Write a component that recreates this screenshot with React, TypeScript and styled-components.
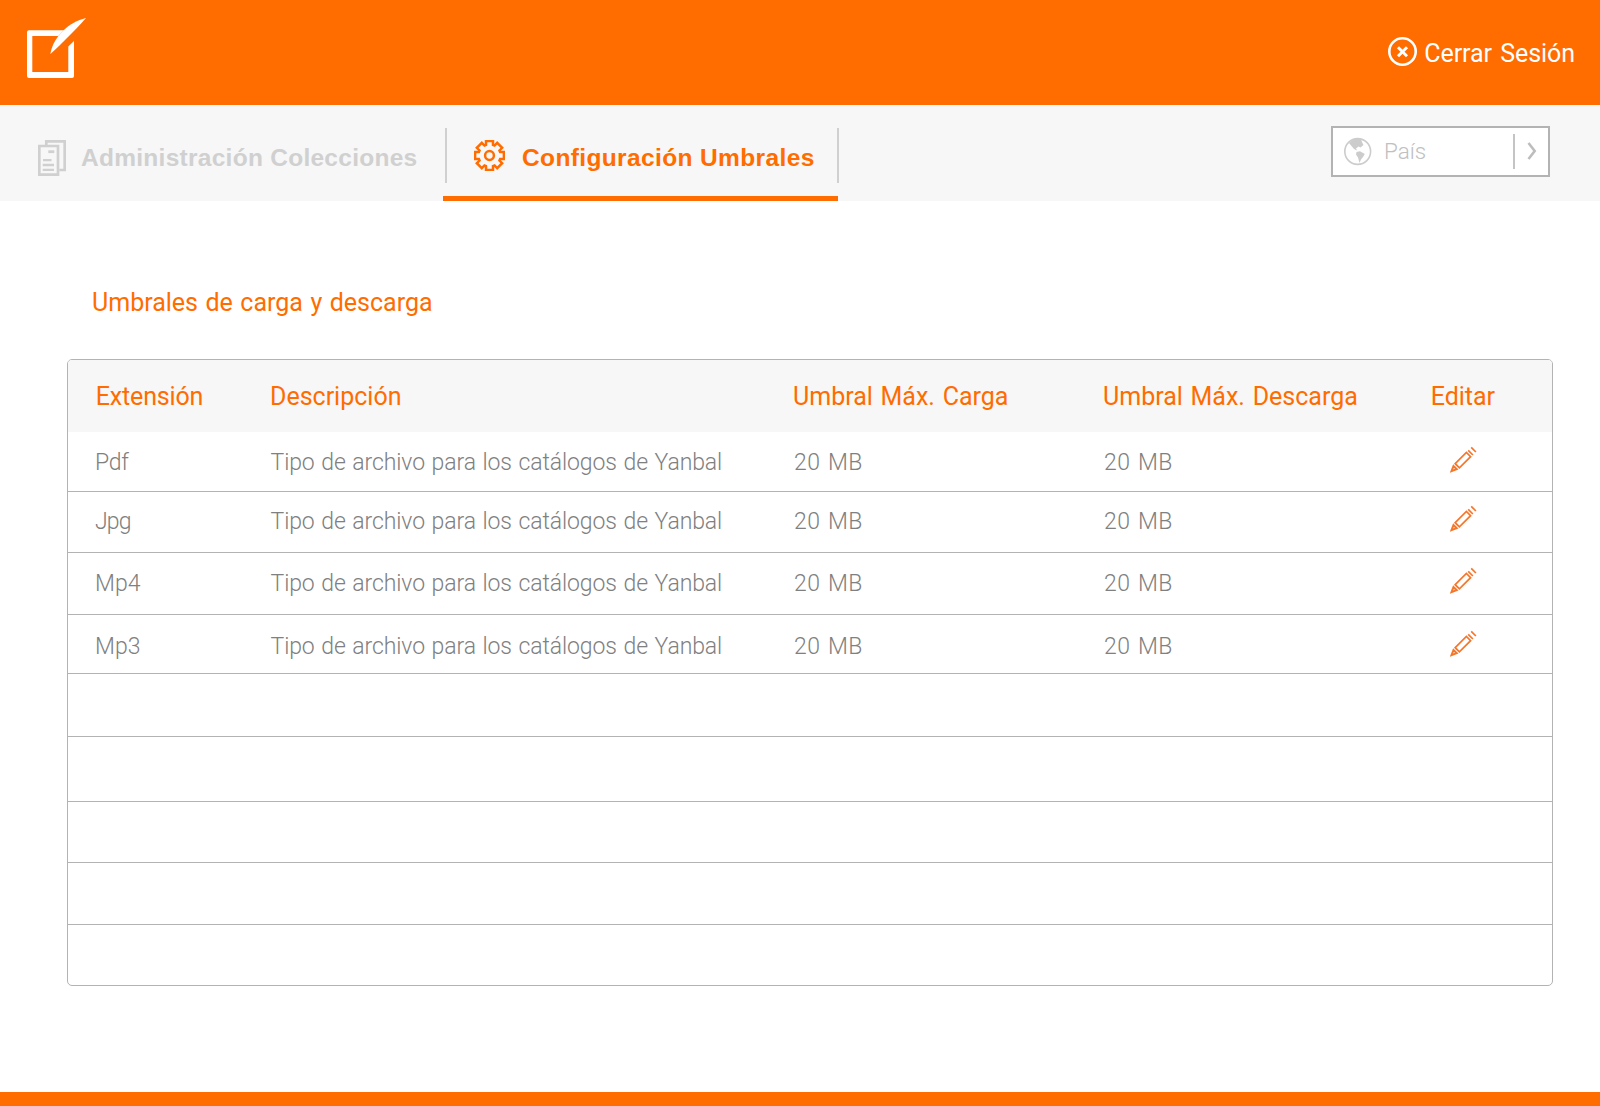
import React from "react";
import styled, { createGlobalStyle } from "styled-components";

const ORANGE = "#ff6c00";
const LINE = "#b3b3b3";

const GlobalStyle = createGlobalStyle`
  * { box-sizing: border-box; }
  body { margin: 0; background: #fff; font-family: Roboto, "Liberation Sans", sans-serif; }
  svg { display: block; flex: none; }
`;

const Page = styled.div`
  display: flex;
  flex-direction: column;
  width: 1600px;
  height: 1106px;
  border-bottom: 14px solid ${ORANGE};
`;

const TopBar = styled.header`
  display: flex;
  justify-content: space-between;
  height: 105px;
  padding: 17px 25px 0 26px;
  background: ${ORANGE};
`;

const Logout = styled.a`
  display: flex;
  height: 29px;
  margin-top: 20px;
  gap: 7px;
  color: #fff;
  font-size: 25px;
  line-height: 33px;
  letter-spacing: -0.05px;
  word-spacing: 2px;
`;

const Nav = styled.nav`
  display: flex;
  height: 96px;
  background: #f7f7f7;
`;

const Tab = styled.a<{ $active?: boolean }>`
  display: flex;
  width: ${p => (p.$active ? 395 : 443)}px;
  padding-left: ${p => (p.$active ? 2 : 38)}px;
  border-bottom: 5px solid ${p => (p.$active ? ORANGE : "transparent")};
  color: ${p => (p.$active ? ORANGE : "#d0d0d0")};
`;

const TabIcon = styled.span<{ $gap: number }>`
  margin: 35px ${p => p.$gap}px 0 0;
`;

const TabLabel = styled.span<{ $spacing: number }>`
  margin-top: 38px;
  font: bold 24.5px/30px "Liberation Sans", sans-serif;
  letter-spacing: ${p => p.$spacing}px;
  white-space: nowrap;
`;

const TabDivider = styled.i<{ $end?: boolean }>`
  flex: none;
  width: 2px;
  height: 55px;
  margin: 23px ${p => (p.$end ? "-1px 0 auto" : "27px 0 0")};
  background: #d0d0d0;
`;

const CountrySelect = styled.div`
  display: flex;
  align-items: center;
  width: 219px;
  height: 51px;
  margin: 21px 50px 0 auto;
  padding: 0 11px 0 11px;
  border: 2px solid ${LINE};
  background: #fff;
  color: #c0c0c0;
  font-size: 22.5px;
  font-weight: 300;
`;

const CountryLabel = styled.span`
  flex: 1;
  padding: 0 0 2px 12px;
`;

const SelectDivider = styled.i`
  width: 2px;
  height: 35px;
  margin-right: 12px;
  background: #c4c4c4;
`;

const Main = styled.main`
  flex: 1;
  padding: 84px 47px 0 67px;
`;

const Title = styled.h1`
  margin: 0;
  padding-left: 25px;
  color: ${ORANGE};
  font-size: 25px;
  font-weight: 400;
  line-height: 36px;
  word-spacing: 1.3px;
`;

const Table = styled.section`
  margin-top: 38px;
  border: 1px solid ${LINE};
  border-radius: 5px;
  overflow: hidden;
`;

const Row = styled.div<{ $height: number; $shift?: number }>`
  display: grid;
  grid-template-columns: 175px 523px 310px 327px 1fr;
  align-items: center;
  height: ${p => p.$height}px;
  padding: ${p => Math.max(p.$shift ?? 0, 0)}px 0 ${p => Math.max(-(p.$shift ?? 0), 0)}px 27px;
  border-bottom: 1px solid ${LINE};
  &:last-child { border-bottom: 0; }
`;

const HeadRow = styled(Row)`
  border-bottom: 0;
  background: #f7f7f7;
  color: ${ORANGE};
  font-size: 25px;
`;

const HeadCell = styled.span<{ $spacing?: number; $indent?: number }>`
  padding-left: ${p => p.$indent ?? 0}px;
  letter-spacing: ${p => p.$spacing ?? 0}px;
  word-spacing: 1.5px;
`;

const Cell = styled.span<{ $spacing?: number; $words?: number; $indent?: number }>`
  padding-left: ${p => p.$indent ?? 0}px;
  color: #808080;
  font-size: 23px;
  font-weight: 300;
  letter-spacing: ${p => p.$spacing ?? 0}px;
  word-spacing: ${p => p.$words ?? 0}px;
`;

const EditButton = styled.span`
  padding: 0 0 6px 20px;
`;

const Logo = () => (
  <svg width="61" height="62" viewBox="26 17 61 62" fill="#fff">
    <path d="M58.3 36H32.300V72H68.300V46.400L74 41V76a2 2 0 0 1-2 2H29a2 2 0 0 1-2-2V32.300a2 2 0 0 1 2-2H64Z" />
    <path d="M86 18C77 20.500 70 24 63.700 30.300L58 36.500C54.500 41 51.500 47 50.300 54C54 51 61 44 66 39C73 32 80 25 86 18Z" />
  </svg>
);

const CloseIcon = () => (
  <svg width="29" height="29" viewBox="0 0 29 29" fill="none" stroke="#fff">
    <circle cx="14.500" cy="14.500" r="13.200" strokeWidth="2.600" />
    <path d="M10 10.200L19 19.200M19 10.200L10 19.200" strokeWidth="3" />
  </svg>
);

const DocsIcon = () => (
  <svg width="28" height="36" viewBox="0 0 28 36" fill="none" stroke="currentColor">
    <path d="M8.300 5V1.300H26.700V30H21.500M1.300 6H20V34.700H1.300Z" strokeWidth="2.700" />
    <path d="M10.300 11.700H16.300" strokeWidth="2.800" />
    <path d="M5 20.200H13.500M4.700 25H16M4.700 29.800H16" strokeWidth="2.300" />
  </svg>
);

const gearOutline = Array.from({ length: 8 }, (_, i) => {
  const a = (i * Math.PI) / 4;
  return [[-3.5, -10.6], [-3.5, -14.4], [3.5, -14.4], [3.5, -10.6]]
    .map(([x, y]) => `${(15.5 + x * Math.cos(a) - y * Math.sin(a)).toFixed(2)},${(15.5 + x * Math.sin(a) + y * Math.cos(a)).toFixed(2)}`)
    .join(" ");
}).join(" ");

const GearIcon = () => (
  <svg width="31" height="31" viewBox="0 0 31 31" fill="none" stroke="currentColor" strokeWidth="2.500">
    <polygon points={gearOutline} />
    <circle cx="15.500" cy="15.500" r="4.400" />
  </svg>
);

const GlobeIcon = () => (
  <svg width="28" height="29" viewBox="0 0 28 29" fill="#ccc">
    <circle cx="13.700" cy="14.500" r="12.900" fill="none" stroke="#ccc" strokeWidth="1.600" />
    <path d="M5 6L10 2L17 2L18 5L19.500 8L16.500 10.500L14.500 9.500L12 11.500L13 13.500L10 12L7.500 9Z" />
    <path d="M12.500 15L16 14.200L20.800 17L19 20L17 22.500L15.500 26L14 20.500L12 17.500Z" />
  </svg>
);

const ChevronIcon = () => (
  <svg width="10" height="19" viewBox="0 0 10 19" fill="none" stroke="#bdbdbd" strokeWidth="2.600">
    <path d="M1.500 1L7.700 9L1.500 17" />
  </svg>
);

const PencilIcon = () => (
  <svg width="27" height="27" viewBox="0 0 27 27" fill="none" stroke="#f5772c" strokeWidth="1.700">
    <path d="M5.200 17.700L16.400 6.500L20.600 10.700L9.400 21.900Z" />
    <path d="M1.500 25.200L3.500 20L6.700 23.200Z" strokeWidth="2" />
    <path d="M18.200 4.300L22.900 9M21.200 1.300L25.900 6" />
  </svg>
);

const files = [
  { ext: "Pdf", spacing: -0.3, height: 60, shift: 1 },
  { ext: "Jpg", spacing: -0.8, height: 61, shift: -2 },
  { ext: "Mp4", spacing: 0, height: 62, shift: 0 },
  { ext: "Mp3", spacing: 0, height: 59, shift: 4 },
];
const emptyRows = [63, 65, 61, 62, 60];

export default function App() {
  return (
    <Page>
      <GlobalStyle />
      <TopBar>
        <Logo />
        <Logout><CloseIcon />Cerrar Sesión</Logout>
      </TopBar>
      <Nav>
        <Tab>
          <TabIcon $gap={15}><DocsIcon /></TabIcon>
          <TabLabel $spacing={0.27}>Administración Colecciones</TabLabel>
        </Tab>
        <Tab $active>
          <TabDivider />
          <TabIcon $gap={17}><GearIcon /></TabIcon>
          <TabLabel $spacing={0.37}>Configuración Umbrales</TabLabel>
          <TabDivider $end />
        </Tab>
        <CountrySelect>
          <GlobeIcon />
          <CountryLabel>País</CountryLabel>
          <SelectDivider />
          <ChevronIcon />
        </CountrySelect>
      </Nav>
      <Main>
        <Title>Umbrales de carga y descarga</Title>
        <Table>
          <HeadRow $height={72} $shift={1}>
            <HeadCell $spacing={-0.15} $indent={0.7}>Extensión</HeadCell>
            <HeadCell>Descripción</HeadCell>
            <HeadCell>Umbral Máx. Carga</HeadCell>
            <HeadCell>Umbral Máx. Descarga</HeadCell>
            <HeadCell $indent={0.7}>Editar</HeadCell>
          </HeadRow>
          {files.map(f => (
            <Row key={f.ext} $height={f.height} $shift={f.shift}>
              <Cell $spacing={f.spacing}>{f.ext}</Cell>
              <Cell $spacing={-0.1} $words={1.1} $indent={0.5}>Tipo de archivo para los catálogos de Yanbal</Cell>
              <Cell $spacing={0.4} $words={1.6} $indent={1}>20 MB</Cell>
              <Cell $spacing={0.4} $words={1.6} $indent={1}>20 MB</Cell>
              <EditButton><PencilIcon /></EditButton>
            </Row>
          ))}
          {emptyRows.map((height, i) => <Row key={i} $height={height} />)}
        </Table>
      </Main>
    </Page>
  );
}
